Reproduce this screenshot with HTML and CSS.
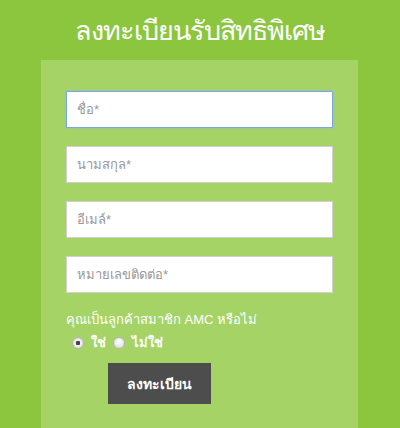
FILE: index.html
```html
<!DOCTYPE html>
<html lang="th">
<head>
  <meta charset="UTF-8">
  <meta name="viewport" content="width=device-width, initial-scale=1.0">
  <title>ลงทะเบียนรับสิทธิพิเศษ</title>
  <link rel="stylesheet" href="styles.css">
</head>
<body>

  <!-- Register Form -->
  <div class="page">
    <h1 class="title">ลงทะเบียนรับสิทธิพิเศษ</h1>

    <form class="register-box">
      <input type="text" class="field focused" placeholder="ชื่อ*">
      <input type="text" class="field" placeholder="นามสกุล*">
      <input type="text" class="field" placeholder="อีเมล์*">
      <input type="text" class="field" placeholder="หมายเลขติดต่อ*">

      <p class="question">คุณเป็นลูกค้าสมาชิก AMC หรือไม่</p>
      <div class="choices">
        <label><input type="radio" name="member" checked> ใช่</label>
        <label><input type="radio" name="member"> ไม่ใช่</label>
      </div>

      <button type="button" class="submit-btn">ลงทะเบียน</button>
    </form>
  </div>

</body>
</html>
```
FILE: styles.css
```css
body {
  margin: 0;
  padding: 0;
  background: #8cc63f;
  font-family: 'Liberation Sans', 'Noto Sans', sans-serif;
  color: #fff;
}

.page {
  width: 317px;
  margin: 0 0 0 41px;
}

.title {
  margin: 0;
  height: 60px;
  line-height: 62px;
  font-size: 27px;
  font-weight: normal;
  letter-spacing: -1px;
  text-align: center;
  color: #fff;
}

.register-box {
  background: #a5d366;
  padding: 31px 25px 24px;
  min-height: 368px;
  box-sizing: border-box;
}

.field {
  display: block;
  width: 100%;
  height: 37px;
  box-sizing: border-box;
  margin: 0 0 18px;
  padding: 0 10px;
  border: 1px solid #d0d0d0;
  background: #fff;
  font-family: inherit;
  font-size: 13px;
  outline: none;
}

.field::placeholder {
  color: #999;
}

.field.focused {
  border: 1px solid #7aa7e0;
  box-shadow: 0 0 2px #8fb6ea;
}

.question {
  margin: 5px 0 0;
  font-size: 13px;
  line-height: 18px;
}

.choices {
  display: flex;
  gap: 4px;
  padding-left: 3px;
  margin-top: 3px;
  font-size: 13px;
  font-weight: bold;
}

.choices label {
  display: flex;
  align-items: center;
}

.choices input {
  appearance: none;
  -webkit-appearance: none;
  margin: 0 7px 0 3px;
  width: 12px;
  height: 12px;
  border-radius: 50%;
  border: 1px solid #b5b5b5;
  background: radial-gradient(circle at 50% 35%, #fff, #d6d6d6);
  box-sizing: border-box;
}

.choices input:checked {
  background: radial-gradient(circle, #444 0, #444 2px, #f2f2f2 2.5px, #cfcfcf 100%);
}

.submit-btn {
  display: block;
  margin: 10px 0 0 42px;
  width: 103px;
  height: 41px;
  background: #4d4d4d;
  color: #fff;
  border: none;
  font-family: inherit;
  font-size: 14px;
  font-weight: bold;
  cursor: pointer;
}
```
